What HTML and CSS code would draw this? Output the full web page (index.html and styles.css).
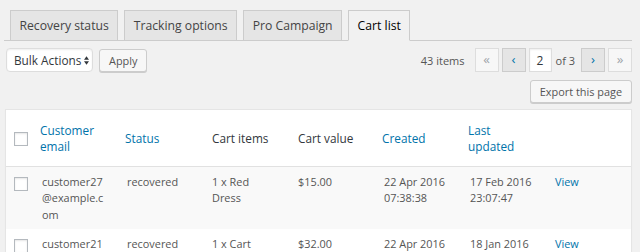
FILE: index.html
```html
<!DOCTYPE html>
<html lang="en">
<head>
    <meta charset="UTF-8">
    <title>Cart list</title>
    <link rel="stylesheet" href="styles.css">
</head>
<body>
    <div class="wrap">
        <nav class="nav-tabs">
            <a class="nav-tab" href="#">Recovery status</a>
            <a class="nav-tab" href="#">Tracking options</a>
            <a class="nav-tab" href="#">Pro Campaign</a>
            <a class="nav-tab active" href="#">Cart list</a>
        </nav>

        <div class="tablenav">
            <div class="bulk">
                <div class="select">
                    <span>Bulk Actions</span>
                    <svg class="select-arrows" width="5" height="9" viewBox="0 0 6 10">
                        <path d="M0 4 L3 0 L6 4 Z M0 6 L3 10 L6 6 Z" fill="#32373c"/>
                    </svg>
                </div>
                <button class="button apply">Apply</button>
            </div>
            <div class="pages">
                <span class="displaying-num">43 items</span>
                <span class="page-btn disabled">&laquo;</span>
                <a class="page-btn" href="#">&lsaquo;</a>
                <input class="current-page" type="text" value="2">
                <span class="paging-text">of 3</span>
                <a class="page-btn" href="#">&rsaquo;</a>
                <span class="page-btn disabled">&raquo;</span>
            </div>
        </div>

        <div class="export-row">
            <button class="button">Export this page</button>
        </div>

        <table class="cart-table">
            <colgroup>
                <col style="width: 28px">
                <col style="width: 85px">
                <col style="width: 85px">
                <col style="width: 86px">
                <col style="width: 86px">
                <col style="width: 86px">
                <col style="width: 85px">
                <col style="width: 84px">
            </colgroup>
            <thead>
                <tr>
                    <th class="check"><input type="checkbox"></th>
                    <th class="sortable"><a href="#">Customer email</a></th>
                    <th class="sortable"><a href="#">Status</a></th>
                    <th>Cart items</th>
                    <th>Cart value</th>
                    <th class="sortable"><a href="#">Created</a></th>
                    <th class="sortable"><a href="#">Last updated</a></th>
                    <th></th>
                </tr>
            </thead>
            <tbody>
                <tr class="alternate">
                    <td class="check"><input type="checkbox"></td>
                    <td class="email">customer27@example.com</td>
                    <td>recovered</td>
                    <td>1 x Red Dress</td>
                    <td>$15.00</td>
                    <td>22 Apr 2016 07:38:38</td>
                    <td>17 Feb 2016 23:07:47</td>
                    <td><a href="#">View</a></td>
                </tr>
                <tr>
                    <td class="check"><input type="checkbox"></td>
                    <td class="email">customer21@example.com</td>
                    <td>recovered</td>
                    <td>1 x Cart Product</td>
                    <td>$32.00</td>
                    <td>22 Apr 2016 07:38:38</td>
                    <td>18 Jan 2016 11:20:05</td>
                    <td><a href="#">View</a></td>
                </tr>
            </tbody>
        </table>
    </div>
</body>
</html>
```

FILE: styles.css
```css
body {
    margin: 0;
    background: #f1f1f1;
    font-family: "Open Sans", "Liberation Sans", sans-serif;
    font-size: 11px;
    color: #444;
}
a {
    color: #0073aa;
    text-decoration: none;
}
.wrap {
    margin: 0 8px 0 5px;
}

/* tabs */
.nav-tabs {
    display: flex;
    margin-left: -1px;
    padding-top: 10px;
    border-bottom: 1px solid #ccc;
}
.nav-tab {
    margin-left: 6px;
    margin-bottom: -1px;
    padding: 4px 8.5px;
    border: 1px solid #ccc;
    background: #e5e5e5;
    color: #444;
    font-size: 12.2px;
    line-height: 21px;
}
.nav-tab.active {
    background: #f1f1f1;
    border-bottom-color: #f1f1f1;
    color: #000;
}

/* table navigation */
.tablenav {
    display: flex;
    justify-content: space-between;
    align-items: center;
    height: 24px;
    margin-top: 7px;
}
.bulk {
    display: flex;
    align-items: center;
}
.select {
    display: flex;
    align-items: center;
    box-sizing: border-box;
    width: 87px;
    height: 24px;
    margin-left: 1px;
    padding-left: 7px;
    background: #fff;
    border: 1px solid #ddd;
    border-radius: 4px;
    box-shadow: inset 0 1px 2px rgba(0, 0, 0, 0.07);
    color: #32373c;
    font-size: 11.8px;
}
.select-arrows {
    margin-left: auto;
    margin-right: 3px;
}
.button {
    box-sizing: border-box;
    height: 23px;
    padding: 0 9px;
    border: 1px solid #ccc;
    border-radius: 3px;
    background: #f7f7f7;
    box-shadow: 0 1px 0 #ccc;
    color: #555;
    font-family: inherit;
    font-size: 10.9px;
    line-height: 21px;
    cursor: pointer;
}
.apply {
    margin-left: 6px;
}
.pages {
    display: flex;
    align-items: center;
    height: 24px;
}
.displaying-num {
    margin-right: 7px;
    color: #555;
}
.page-btn {
    display: flex;
    align-items: center;
    justify-content: center;
    box-sizing: border-box;
    width: 24px;
    height: 24px;
    margin-left: 3px;
    padding-bottom: 2px;
    border: 1px solid #ccc;
    background: #e5e5e5;
    color: #0073aa;
    font-size: 13.4px;
}
.page-btn.disabled {
    border-color: #ddd;
    background: #f7f7f7;
    color: #a0a5aa;
}
.current-page {
    box-sizing: border-box;
    width: 23px;
    height: 24px;
    margin: 0 0 0 3px;
    padding: 0;
    border: 1px solid #ddd;
    background: #fff;
    box-shadow: inset 0 1px 2px rgba(0, 0, 0, 0.07);
    color: #32373c;
    font-family: inherit;
    font-size: 12px;
    text-align: center;
}
.paging-text {
    margin: 0 3px 0 4px;
    color: #555;
}
.export-row {
    display: flex;
    justify-content: flex-end;
    margin-top: 8px;
}

/* list table */
.cart-table {
    width: 100%;
    margin-top: 6px;
    table-layout: fixed;
    border-spacing: 0;
    border: 1px solid #e5e5e5;
    background: #fff;
    box-shadow: 0 1px 1px rgba(0, 0, 0, 0.04);
}
.cart-table th {
    box-sizing: border-box;
    height: 57px;
    padding: 0 13px 0 8px;
    border-bottom: 1px solid #e1e1e1;
    vertical-align: middle;
    text-align: left;
    font-weight: 400;
    font-size: 11.8px;
    line-height: 16.5px;
    color: #32373c;
}
.cart-table th.sortable a {
    display: block;
    margin-left: -2px;
}
.cart-table td {
    padding: 7px 13px 6px 8px;
    vertical-align: top;
    font-size: 10.9px;
    line-height: 16.4px;
    color: #555;
}
.cart-table tr.alternate td {
    background: #f9f9f9;
}
.cart-table td.email {
    overflow-wrap: anywhere;
}
.cart-table .check {
    padding: 0 0 0 8px;
}
.cart-table th.check {
    padding-top: 1px;
}
.cart-table td.check {
    padding-top: 10px;
}
.check input {
    display: block;
    box-sizing: border-box;
    width: 14px;
    height: 14px;
    margin: 0;
    appearance: none;
    border: 1px solid #b4b9be;
    background: #fff;
    box-shadow: inset 0 1px 2px rgba(0, 0, 0, 0.1);
}
```
